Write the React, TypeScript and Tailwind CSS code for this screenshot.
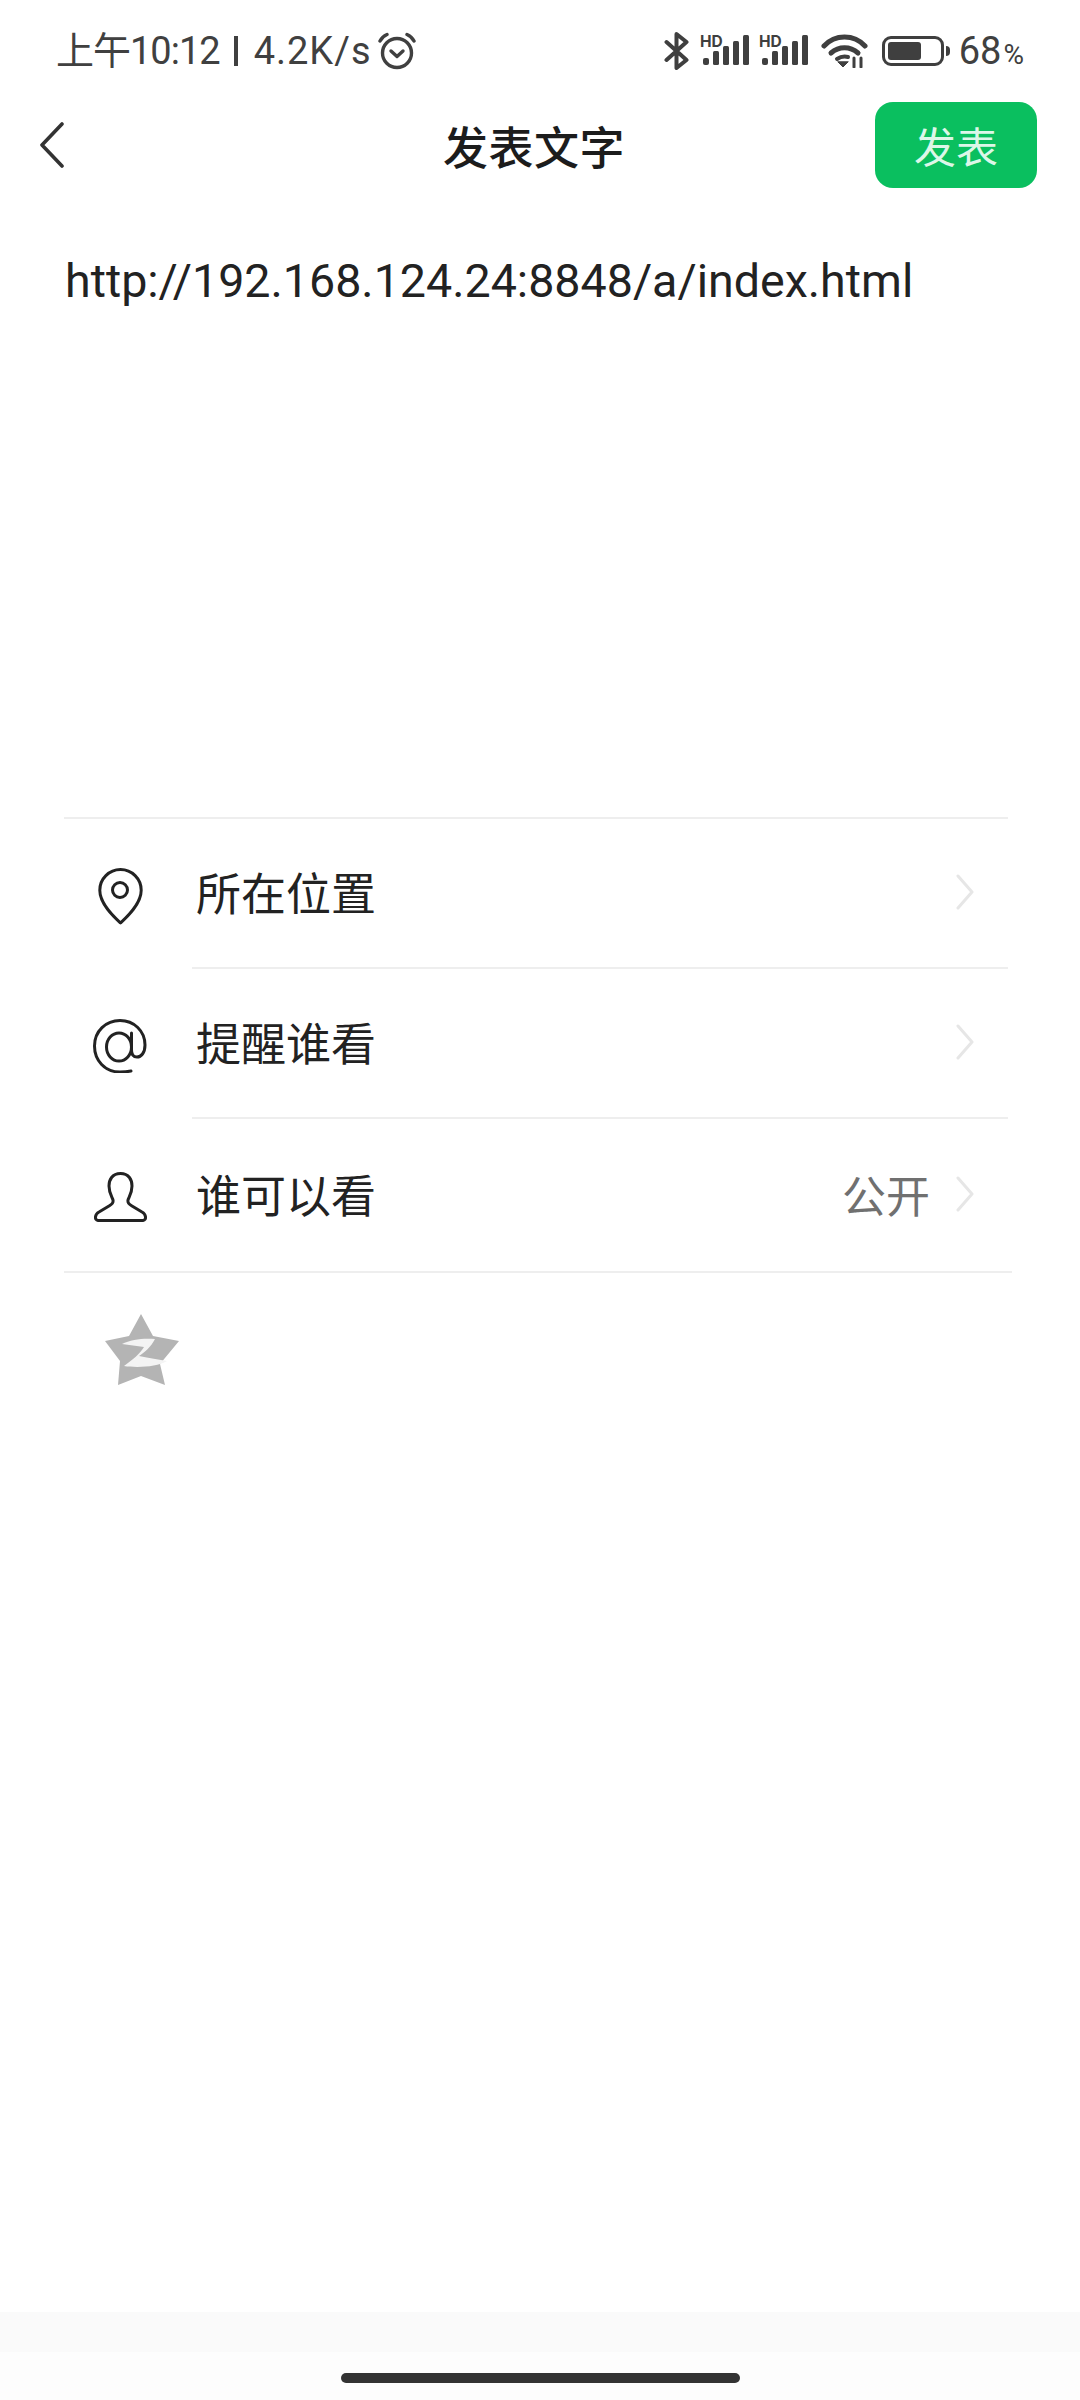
import React from 'react';

const CJK = "font-['Noto_Sans_CJK_SC','Noto_Sans',sans-serif]";

function SignalHd() {
  return (
    <svg width="50" height="32" viewBox="0 0 50 32" fill="#3f3f3f" overflow="visible">
      <text x="0" y="11.500" fontSize="15.500" fontWeight="700" fontFamily="Inter, sans-serif">HD</text>
      <rect x="3" y="23" width="6" height="7" rx="2" />
      <rect x="13" y="16" width="6" height="14" rx="1.500" />
      <rect x="23" y="11" width="6" height="19" rx="1.500" />
      <rect x="33" y="6" width="6" height="24" rx="1.500" />
      <rect x="43" y="0" width="6" height="30" rx="1.500" />
    </svg>
  );
}

function StatusBar() {
  return (
    <div className="h-[102px] flex items-center justify-between pl-[56px] pr-[56px] text-[#404040]">
      <div className="flex items-center text-[38px] leading-none font-['Roboto','Noto_Sans_CJK_SC',sans-serif]">
        <span className="tracking-[-1px]">上午10:12</span>
        <div className="ml-[14px] w-[4px] h-[30px] bg-[#404040]" />
        <span className="ml-[16px] tracking-[1px]">4.2K/s</span>
        <svg className="ml-[6px]" width="38" height="38" viewBox="0 0 38 38" fill="none" stroke="#404040" strokeWidth="3.400" strokeLinecap="round" strokeLinejoin="round">
          <circle cx="19" cy="21" r="14.500" />
          <path d="M13 19l6 5.500 6-5.500" />
          <path d="M2 9c1.500-3 3.500-5 7-6.500" />
          <path d="M36 9c-1.500-3-3.500-5-7-6.500" />
        </svg>
      </div>
      <div className="flex items-center">
        <svg width="25" height="38" viewBox="0 0 25 38" fill="none" stroke="#3f3f3f" strokeWidth="4" strokeLinejoin="round" strokeLinecap="round">
          <path d="M2.500 10l20 18-10 8V2l10 8-20 18" />
        </svg>
        <div className="ml-[11px] flex items-center gap-[9px]">
          <SignalHd />
          <SignalHd />
        </div>
        <svg className="ml-[12px]" width="47" height="34" viewBox="0 0 47 34" fill="none" stroke="#3f3f3f" strokeWidth="5" strokeLinecap="round">
          <path d="M3 12C14 0 33 0 44 12" />
          <path d="M10 19c8-7 19-7 27 0" />
          <path d="M16 25c3-2 7-3 11-2" strokeWidth="4" />
          <path d="M17 28l5 5 5-5z" fill="#3f3f3f" strokeWidth="1" />
          <path d="M33 24v9M40 24v9" strokeWidth="3" />
        </svg>
        <div className="ml-[14px] flex items-center">
          <div className="w-[62px] h-[30px] rounded-[9px] border-[3px] border-[#3f3f3f] p-[3px]">
            <div className="w-[33px] h-full rounded-[3px] bg-[#3f3f3f]" />
          </div>
          <div className="ml-[2px] w-[4px] h-[10px] rounded-r-sm bg-[#3f3f3f]" />
        </div>
        <div className="ml-[9px] flex items-baseline font-['Roboto',sans-serif] leading-none">
          <span className="text-[38px]">68</span>
          <span className="text-[28px] ml-[2px]">%</span>
        </div>
      </div>
    </div>
  );
}

function Chevron() {
  return (
    <svg width="18" height="36" viewBox="0 0 18 36" fill="none" stroke="#e6e6e6" strokeWidth="3" strokeLinecap="round" strokeLinejoin="round">
      <path d="M2 2l14 16L2 34" />
    </svg>
  );
}

function PinIcon() {
  return (
    <svg width="45" height="57" viewBox="0 0 45 57" fill="none" stroke="#222" strokeWidth="3" strokeLinejoin="round">
      <path d="M22.500 55C16 49 1.800 36 1.800 22.300A20.700 20.700 0 0 1 43.200 22.300C43.200 36 29 49 22.500 55z" />
      <circle cx="22" cy="22" r="7.500" />
    </svg>
  );
}

function AtIcon() {
  return (
    <svg width="54" height="54" viewBox="0 0 54 54" fill="none" stroke="#222" strokeWidth="3" strokeLinecap="round" strokeLinejoin="round">
      <path d="M38 52C34 52.800 31 53 27 53 12 53 1.500 41.500 1.500 27 1.500 12 13 1.500 27 1.500 41 1.500 52 12 52 26 52 34 48 38 44 38 40 38 38.500 35 38.500 31V14" />
      <ellipse cx="26" cy="28" rx="12.500" ry="14" />
    </svg>
  );
}

function PersonIcon() {
  return (
    <svg width="53" height="50" viewBox="0 0 53 50" fill="none" stroke="#222" strokeWidth="3" strokeLinejoin="round">
      <path d="M26.500 1.500C18 1.500 15 8 15 14 15 21 18 25 19 28 19.500 31 18 32 15 34L5 40C1 42 0 48 4 48.500H49C53 48 52 42 48 40L38 34C35 32 33.500 31 34 28 35 25 38 21 38 14 38 8 35 1.500 26.500 1.500z" />
    </svg>
  );
}

function QzoneIcon() {
  return (
    <svg width="74" height="71" viewBox="0 0 74 71">
      <path d="M36 0L48 22 74 27 55 50 60 71 36 62 13 71 15 47 0 27 24 22z" fill="#b4b4b4" />
      <path d="M17 30C26 25 40 24 50 25 46 33 40 38 34 42 42 44 52 45 62 47 52 53 32 54 19 52 27 46 35 40 39 33 32 32 24 31 17 30z" fill="#f4f4f4" />
    </svg>
  );
}

const ROWS = [
  { icon: <PinIcon />, label: '所在位置', height: 'h-[150px]' },
  { icon: <AtIcon />, label: '提醒谁看', height: 'h-[150px]' },
  { icon: <PersonIcon />, label: '谁可以看', value: '公开', height: 'h-[152px]' },
];

export default function App() {
  return (
    <div className={`w-[1080px] h-[2400px] bg-white flex flex-col overflow-hidden ${CJK}`}>
      <StatusBar />

      <div className="h-[86px] grid grid-cols-[1fr_auto_1fr] items-center pl-[40px] pr-[43px]">
        <svg width="24" height="46" viewBox="0 0 24 46" fill="none" stroke="#333" strokeWidth="3.600" strokeLinecap="round" strokeLinejoin="round">
          <path d="M22 2L2 23l20 21" />
        </svg>
        <div className="text-[45px] font-medium text-[#1c1c1c] leading-none mr-[9px] tracking-[0.500px]">发表文字</div>
        <div className="flex justify-end">
          <button className="w-[162px] h-[86px] rounded-[18px] bg-[#0abf5f] text-[#dcf7e8] text-[42px] leading-none">发表</button>
        </div>
      </div>

      <div className="h-[629px] pt-[63px] pl-[65px]">
        <div className="font-['Roboto',sans-serif] text-[46.600px] leading-[60px] text-[#222]">http://192.168.124.24:8848/a/index.html</div>
      </div>

      <div className="ml-[64px] w-[944px] border-t-2 border-[#eeeeee]">
        {ROWS.map((row, i) => (
          <div key={row.label} className={`flex ${row.height}`}>
            <div className="w-[128px] flex items-center justify-center pr-[16px] pt-[4px]">{row.icon}</div>
            <div className={`flex-1 flex items-center justify-between pl-[4px] pr-[34px] pb-[3px] ${i < 2 ? 'border-b-2 border-[#eeeeee]' : ''}`}>
              <span className="text-[45px] leading-none text-[#222]">{row.label}</span>
              <div className="flex items-center gap-[26px]">
                {row.value && <span className="text-[44px] leading-none text-[#707070]">{row.value}</span>}
                <Chevron />
              </div>
            </div>
          </div>
        ))}
      </div>
      <div className="ml-[64px] w-[948px] h-[2px] bg-[#eeeeee]" />

      <div className="mt-[41px] ml-[105px]">
        <QzoneIcon />
      </div>

      <div className="flex-1" />
      <div className="h-[40px] bg-[#fafafa]" />
      <div className="h-[48px] bg-[#fdfdfd] flex justify-center pt-[21px]">
        <div className="w-[399px] h-[10px] rounded-full bg-[#333]" />
      </div>
    </div>
  );
}
